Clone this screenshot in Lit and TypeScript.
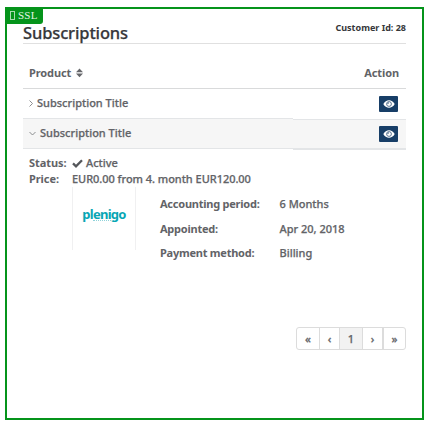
import { LitElement, html, css, svg } from "lit";
import { customElement } from "lit/decorators.js";

const eye = html`<svg width="12" height="8" viewBox="0 0 12 8">
  <path d="M.3 4C3 -1.1 9 -1.1 11.7 4C9 9.1 3 9.1 .3 4Z" fill="#fff" />
  <circle cx="6" cy="4" r="2.4" fill="#fff" stroke="#173e67" stroke-width=".7" />
  <path d="M4.7 4A1.4 1.4 0 0 1 6 2.7" fill="none" stroke="#173e67" stroke-width=".7" />
</svg>`;

const sort = html`<svg class="sort" width="7" height="10" viewBox="0 0 7 10">
  <path d="M0 4.2L3.5 .4L7 4.2ZM0 5.5H7L3.5 9.3Z" fill="#66676b" />
</svg>`;

const chevron = (open: boolean) => html`<svg class="chev" width=${open ? 7 : 4} height="7" viewBox=${open ? "0 0 7 7" : "0 0 4 7"}>
  ${svg`<path d=${open ? "M.5 2L3.5 5L6.5 2" : "M.5 .5L3.5 3.5L.5 6.5"} fill="none" stroke="#808184" stroke-width=".9" />`}
</svg>`;

const check = html`<svg class="check" width="11" height="9" viewBox="0 0 11 9">
  <path d="M1 4.4L4 7.3L10 1.3" fill="none" stroke="#55575b" stroke-width="2.3" />
</svg>`;

@customElement("app-root")
export class AppRoot extends LitElement {
  static styles = css`
    :host {
      display: block;
      box-sizing: border-box;
      height: 426px;
      padding: 7px 5px 6px;
      background: #fff;
      color: #626367;
      font: 500 11px/16px "Noto Sans", "Open Sans", sans-serif;
      white-space: nowrap;
    }
    * { box-sizing: border-box; }
    svg { display: block; flex: none; }
    .frame {
      position: relative;
      width: 419px;
      height: 413px;
      padding: 11px 16px 0;
      border: 2px solid #05941b;
    }
    .badge {
      position: absolute;
      left: -2px;
      top: -2px;
      width: 38px;
      height: 17px;
      padding-left: 5px;
      display: flex;
      align-items: center;
      gap: 3px;
      border-radius: 0 0 3px 0;
      background: #05941b;
      color: #e4f5e6;
      font: 11px/17px "Liberation Serif", serif;
      letter-spacing: 0.2px;
    }
    .glyph { width: 5px; height: 9px; border: 1px solid #a9dab0; }
    .head {
      display: flex;
      justify-content: space-between;
      height: 24px;
      border-bottom: 1px solid #e0e0e0;
      color: #36373a;
    }
    .title { font-size: 16.5px; line-height: 26px; letter-spacing: -0.13px; }
    .customer { font-size: 9px; font-weight: 700; line-height: 16px; }
    .title, .sub, .status, .price, .value, .page { -webkit-text-stroke: 0.25px currentColor; }
    .cols {
      display: flex;
      justify-content: space-between;
      height: 45px;
      padding: 21px 7px 0 6px;
      border-bottom: 1px solid #d9dadb;
      font-weight: 700;
      letter-spacing: -0.1px;
    }
    .product { display: flex; gap: 5px; }
    .sort { margin-top: 3px; }
    .row { display: flex; height: 30px; }
    .name {
      width: 270px;
      padding: 0 0 1px 6px;
      display: flex;
      align-items: center;
      border-bottom: 1px solid #e3e5e7;
    }
    .act {
      flex: 1;
      height: 31px;
      padding: 7px 8px 0 0;
      display: flex;
      justify-content: flex-end;
      border-bottom: 1px solid #e3e5e7;
    }
    .open .name { background: #f6f6f6; gap: 4px; }
    .open .act { background: #f6f6f6; border-bottom-width: 2px; border-top: 1px solid #e3e5e7; padding-top: 6px; }
    .shut .name { gap: 4px; }
    .view {
      width: 19px;
      height: 16px;
      padding: 0;
      display: grid;
      place-items: center;
      border: 0;
      border-radius: 1px;
      background: #173e67;
    }
    .facts { display: grid; grid-template-columns: 43px 1fr; padding: 6px 0 0 6px; }
    .facts b { font-weight: 700; letter-spacing: -0.08px; }
    .status { display: flex; gap: 3px; }
    .price { letter-spacing: -0.04px; }
    .check { margin-top: 4px; }
    .info { display: flex; padding-left: 49px; }
    .pic {
      width: 64px;
      height: 63px;
      padding-top: 19px;
      border: solid #f0f0f1;
      border-width: 0 1px;
      display: flex;
      flex-direction: column;
      align-items: center;
    }
    .logo { color: #08a6b4; font: 700 13px/16px "Noto Sans", sans-serif; letter-spacing: -0.75px; }
    .dots { width: 22px; border-top: 1px dotted #8fd3da; margin-top: -2px; }
    .details {
      display: grid;
      grid-template-columns: 119.5px 1fr;
      grid-auto-rows: 24.5px;
      height: 73px;
      margin: 9px 0 0 24px;
    }
    .details b { font-weight: 700; letter-spacing: -0.24px; }
    .pager {
      display: flex;
      width: 110px;
      height: 23px;
      margin: 58px 0 0 auto;
      border: 1px solid #dcdcdc;
      border-radius: 3px;
    }
    .page {
      display: grid;
      place-items: center;
      border-right: 1px solid #dcdcdc;
      width: 23px;
    }
    .page:nth-child(2) { width: 20px; }
    .page:nth-child(4) { width: 21px; border-right-width: 2px; }
    .page:last-child { border: 0; flex: 1; }
    .current { background: #f2f2f2; }
  `;

  private row(open: boolean) {
    return html`<div class="row ${open ? "open" : "shut"}">
      <div class="name">${chevron(open)}<span class="sub">Subscription Title</span></div>
      <div class="act"><button class="view" aria-label="View">${eye}</button></div>
    </div>`;
  }

  render() {
    const details = [
      ["Accounting period:", "6 Months"],
      ["Appointed:", "Apr 20, 2018"],
      ["Payment method:", "Billing"],
    ];
    return html`<div class="frame">
      <div class="badge"><span class="glyph"></span><span>SSL</span></div>
      <div class="head"><span class="title">Subscriptions</span><span class="customer">Customer Id: 28</span></div>
      <div class="cols"><span class="product">Product ${sort}</span><span>Action</span></div>
      ${this.row(false)}${this.row(true)}
      <div class="facts">
        <b>Status:</b><span class="status">${check}Active</span>
        <b>Price:</b><span class="price">EUR0.00 from 4. month EUR120.00</span>
      </div>
      <div class="info">
        <div class="pic"><span class="logo">plenigo</span><span class="dots"></span></div>
        <div class="details">${details.map(([k, v]) => html`<b>${k}</b><span class="value">${v}</span>`)}</div>
      </div>
      <div class="pager">
        ${["«", "‹", "1", "›", "»"].map((p) => html`<span class="page ${p === "1" ? "current" : ""}">${p}</span>`)}
      </div>
    </div>`;
  }
}
